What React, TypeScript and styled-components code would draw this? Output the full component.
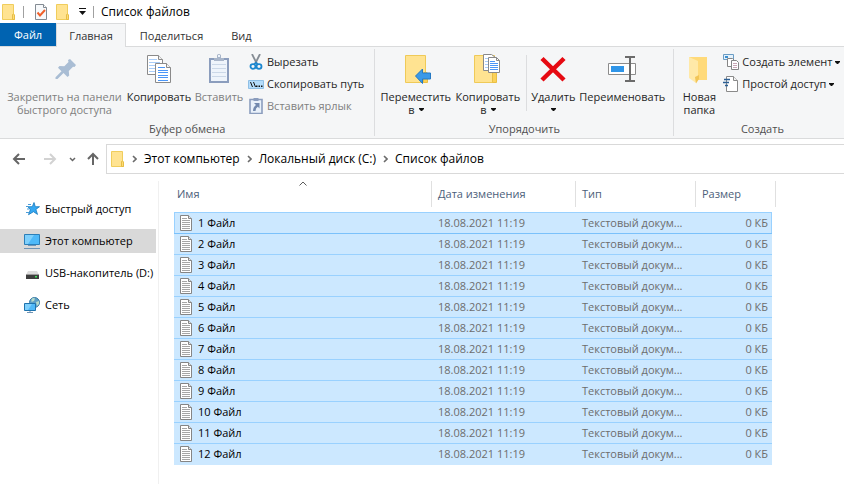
import React from "react";
import styled, { createGlobalStyle, css } from "styled-components";

const GlobalStyle = createGlobalStyle`
  *, *::before, *::after { box-sizing: border-box; }
  body {
    margin: 0;
    background: #fff;
    color: #000;
    font-family: "Open Sans", "Noto Sans", sans-serif;
    font-size: 12px;
    line-height: 16px;
  }
  button {
    font: inherit;
    color: inherit;
    background: none;
    border: 0;
    padding: 0;
    cursor: default;
  }
  svg { display: block; flex: none; }
`;

/* ---------- icons ---------- */

const FolderIcon = () => (
  <svg width="14" height="16" viewBox="0 0 14 16" aria-hidden="true">
    <path d="M.5 .5h11v9.5l1 1v4.500H.5z" fill="#ffe391" stroke="#f0cd5c" />
    <path d="M10.500 15.500v-5q1-.8 2 .5v4.500z" fill="#ffdc75" stroke="#e6bd45" />
  </svg>
);

const CheckDocIcon = () => (
  <svg width="12" height="16" viewBox="0 0 12 16" aria-hidden="true">
    <path d="M.5.5h8l3 3v12H.5z" fill="#f7f9fb" stroke="#838b93" />
    <path d="M8.500.5v3h3" fill="#fff" stroke="#838b93" />
    <path d="M2.500 8.500l2.500 3 5-5.500" fill="none" stroke="#f0602a" strokeWidth="2" />
  </svg>
);

const CustomizeIcon = () => (
  <svg width="7" height="8" viewBox="0 0 7 8" aria-hidden="true">
    <path d="M0 0h7v1H0zM0 3h7L3.500 7z" fill="#111" />
  </svg>
);

const Caret = () => (
  <svg width="5" height="3" viewBox="0 0 5 3" aria-hidden="true">
    <path d="M0 0h5v1L3 3H2L0 1z" fill="#111" />
  </svg>
);

const PinIcon = () => (
  <svg width="32" height="32" viewBox="0 0 32 32" aria-hidden="true">
    <path
      d="M19 6l2-1 6 6-1.500 2-1.500-.3-4.200 4.300.4 4.500-1.700 1.500-4-4-6 6H6.500v-1.700l6-6-3.500-3.500 1.500-1.800 4.800.3L19.500 8z"
      fill="#a9bdd4"
    />
  </svg>
);

const CopyIcon = () => (
  <svg width="32" height="32" viewBox="0 0 32 32" aria-hidden="true">
    <path d="M4.500 1.500h11l4 4v15h-15z" fill="#fff" stroke="#8a8a8a" />
    <path d="M15.500 1.500v4h4" fill="#f2f2f2" stroke="#8a8a8a" />
    <path d="M6 5.500h8M6 8.500h11M6 11.500h6M6 14.500h6M6 17.500h6" stroke="#a9cdf8" />
    <path d="M12.500 9.500h11l4 4v15h-15z" fill="#fff" stroke="#8a8a8a" />
    <path d="M23.500 9.500v4h4" fill="#f2f2f2" stroke="#8a8a8a" />
    <path d="M15 13.500h7M15 16.500h10M15 18.500h10M15 21.500h10M15 23.500h10M15 26.500h10" stroke="#4b96f7" />
  </svg>
);

const PasteIcon = () => (
  <svg width="32" height="32" viewBox="0 0 32 32" aria-hidden="true">
    <path d="M6 4h20v25H6z" fill="#8b9dbd" />
    <path d="M8 6h16v21H8z" fill="#eef4fb" />
    <path d="M9 10.500h14M9 14.500h14M9 18.500h14M9 22.500h14" stroke="#cbd8e8" />
    <path d="M11 4h3V1q2-2 4 0v3h3v3H11z" fill="#a9b6ca" />
    <path d="M15 1h2v2h-2z" fill="#eef4fb" />
  </svg>
);

const ScissorsIcon = () => (
  <svg width="16" height="16" viewBox="0 0 16 16" aria-hidden="true">
    <path d="M4 0l5 10M12 0L7 10" stroke="#858c94" strokeWidth="1.800" fill="none" />
    <ellipse cx="5" cy="12.500" rx="2.500" ry="2.300" fill="none" stroke="#1b87cf" strokeWidth="1.800" />
    <ellipse cx="11" cy="12.500" rx="2.500" ry="2.300" fill="none" stroke="#1b87cf" strokeWidth="1.800" />
    <path d="M6 10.500l2-2 2 2" fill="none" stroke="#1b87cf" strokeWidth="1.500" />
  </svg>
);

const PathIcon = () => (
  <svg width="16" height="16" viewBox="0 0 16 16" aria-hidden="true">
    <path d="M.5 4.500h15v8H.5z" fill="#b4dcfb" stroke="#8fbfe5" />
    <path d="M2.500 6l2 5M5.500 6l2 5" stroke="#111" />
    <path d="M8 9.500h1.500v1.500H8zM10.500 9.500H12v1.500h-1.500zM13 9.500h1.500v1.500H13z" fill="#111" />
  </svg>
);

const ShortcutIcon = () => (
  <svg width="16" height="16" viewBox="0 0 16 16" aria-hidden="true">
    <path d="M2 1.500h12v14H2z" fill="#e9f1fa" stroke="#8b9dbd" strokeWidth="1.600" />
    <path d="M5.500 0h5v3h-5z" fill="#8b9dbd" />
    <path d="M6 5h5.500v5.500L9.800 8.800Q7.500 10 7.500 13H5q0-4 3-6z" fill="#7389ae" />
  </svg>
);

const MoveIcon = () => (
  <svg width="32" height="32" viewBox="0 0 32 32" aria-hidden="true">
    <path d="M5.500 1.500h20v17h1v10h-21z" fill="#ffe391" stroke="#efca58" />
    <path d="M23.500 28.500V19q1.500-1.500 4 0v9.500z" fill="#fbd25a" stroke="#e9bf45" />
    <path d="M15.500 22l7-7v4h8v6h-8v4.500z" fill="#3a99e8" stroke="#2478c3" />
  </svg>
);

const CopyToIcon = () => (
  <svg width="32" height="32" viewBox="0 0 32 32" aria-hidden="true">
    <path d="M2.500 1.500h20v17h1v10h-21z" fill="#ffe391" stroke="#efca58" />
    <path d="M20.500 28.500V19q1.500-1.500 4 0v9.500z" fill="#fbd25a" stroke="#e9bf45" />
    <path d="M11.500.5h8l4 3v13h-12z" fill="#fff" stroke="#8a8a8a" />
    <path d="M13 4.500h3M13 7.500h3M13 10.500h3M13 13.500h3" stroke="#a9cdf8" />
    <path d="M16.500 3.500h8l3 3v12h-11z" fill="#fff" stroke="#8a8a8a" />
    <path d="M24.500 3.500v3h3" fill="none" stroke="#8a8a8a" />
    <path d="M18 7.500h5M18 9.500h8M18 11.500h8M18 13.500h8M18 15.500h8" stroke="#4b96f7" />
  </svg>
);

const DeleteIcon = () => (
  <svg width="32" height="32" viewBox="0 0 32 32" aria-hidden="true">
    <path d="M5 4.500L27 26M27 4.500L5 26" stroke="#e60a12" strokeWidth="4.500" fill="none" />
  </svg>
);

const RenameIcon = () => (
  <svg width="32" height="32" viewBox="0 0 32 32" aria-hidden="true">
    <path d="M2.500 9.500h27v11h-27z" fill="#fff" stroke="#8c8c8c" />
    <path d="M5 12h13v6H5z" fill="#2f95e8" />
    <path d="M19 3h4.500l.5 1 .5-1H29M24 4v22M19 27h4.500l.5-1 .5 1H29" stroke="#6b6b6b" strokeWidth="2" fill="none" />
  </svg>
);

const NewFolderIcon = () => (
  <svg width="32" height="32" viewBox="0 0 32 32" aria-hidden="true">
    <path d="M6 3h18v23H10z" fill="#ffda7a" />
    <path d="M6 3l9 4v16l-2 6-7-5z" fill="#ffe9a8" />
    <path d="M12 23l4-2v4l-3 4.500z" fill="#f2c557" />
  </svg>
);

const NewItemIcon = () => (
  <svg width="16" height="16" viewBox="0 0 16 16" aria-hidden="true">
    <path d="M.5.5h10v5H.5z" fill="#e4f1fb" stroke="#6a9cc4" />
    <path d="M2 2h3v2H2z" fill="#3b8fd0" />
    <path d="M4.500 4.500h5l2 2v6h-7z" fill="#fff" stroke="#858585" />
    <path d="M8.500 6.500h5l2 2v7h-7z" fill="#fff" stroke="#858585" />
    <path d="M10 9.500h4M10 11.500h4M10 13.500h4" stroke="#c9a6b6" />
  </svg>
);

const EasyAccessIcon = () => (
  <svg width="16" height="16" viewBox="0 0 16 16" aria-hidden="true">
    <path d="M3.500.5h7l4 4v11h-11z" fill="#fff" stroke="#8a8a8a" />
    <path d="M10.500.5v4h4" fill="#f2f2f2" stroke="#8a8a8a" />
    <path d="M1 3.500h6M0 6.500h6M2 9.500h3" stroke="#2c5f94" strokeWidth="1.300" />
  </svg>
);

const ArrowLeft = () => (
  <svg width="14" height="12" viewBox="0 0 14 12" aria-hidden="true">
    <path d="M7 1L2 6l5 5M2 6h11" fill="none" stroke="currentColor" strokeWidth="2" />
  </svg>
);

const ArrowRight = () => (
  <svg width="14" height="12" viewBox="0 0 14 12" aria-hidden="true">
    <path d="M7 1l5 5-5 5M12 6H1" fill="none" stroke="currentColor" strokeWidth="2" />
  </svg>
);

const ArrowUp = () => (
  <svg width="12" height="14" viewBox="0 0 12 14" aria-hidden="true">
    <path d="M1 7l5-5 5 5M6 2v11" fill="none" stroke="currentColor" strokeWidth="2" />
  </svg>
);

const ChevronDown = () => (
  <svg width="7" height="5" viewBox="0 0 7 5" aria-hidden="true">
    <path d="M1 1l2.500 2.500L6 1" fill="none" stroke="currentColor" strokeWidth="1.500" />
  </svg>
);

const ChevronRight = () => (
  <svg width="5" height="8" viewBox="0 0 5 8" aria-hidden="true">
    <path d="M1 1l3 3-3 3" fill="none" stroke="#6b6b6b" strokeWidth="1.600" />
  </svg>
);

const SortUp = () => (
  <svg width="9" height="5" viewBox="0 0 9 5" aria-hidden="true">
    <path d="M1 4.500l3.500-3.500L8 4.500" fill="none" stroke="#5c5c5c" />
  </svg>
);

const StarIcon = () => (
  <svg width="16" height="16" viewBox="0 0 16 16" aria-hidden="true">
    <path
      d="M10 1.500l1.300 4.200H15.500l-3.600 2.700 1.600 5L9.500 10.700l-5 3 1.800-4.900L4 5.700h4.300z"
      fill="#35a8f2"
      stroke="#1779bd"
      strokeWidth=".8"
    />
    <path d="M4 3.500h3M2 5.500h3M3 8h2M2 11.500h3" stroke="#4b9dd8" />
  </svg>
);

const ComputerIcon = () => (
  <svg width="16" height="16" viewBox="0 0 16 16" aria-hidden="true">
    <path d="M.5 1.500h15v10H.5z" fill="#4fb9f8" stroke="#2c7fb8" />
    <path d="M1 2h9L4 11H1z" fill="#7fd0fc" />
    <path d="M4 12.500h8M0 15.500h16" stroke="#6f94b5" />
  </svg>
);

const DriveIcon = () => (
  <svg width="16" height="16" viewBox="0 0 16 16" aria-hidden="true">
    <path d="M4 6h9l2 4H2z" fill="#dcdcdc" />
    <path d="M2 9h13v5H2z" fill="#3d3d3d" />
    <path d="M2 9h13v1H2z" fill="#9c9c9c" />
    <path d="M11 11h2v1.500h-2z" fill="#3fe05a" />
  </svg>
);

const NetworkIcon = () => (
  <svg width="16" height="16" viewBox="0 0 16 16" aria-hidden="true">
    <circle cx="10.500" cy="5.500" r="5" fill="#5d9fc6" stroke="#3a7ca6" />
    <path d="M7.500 2q2-1.500 3.500-.5l-1 2.500-2.500 1zM12 5l3-1v3l-2 2z" fill="#b7dbc9" />
    <path d="M.5 6.500h11v7H.5z" fill="#4fb9f8" stroke="#1f73ad" />
    <path d="M1 7h7l-4 6H1z" fill="#7fd0fc" />
    <path d="M6 14v1.500M3 15.500h6" stroke="#6f94b5" />
  </svg>
);

const TextFileIcon = () => (
  <svg width="12" height="16" viewBox="0 0 12 16" aria-hidden="true">
    <path d="M.5.5h8l3 3v12H.5z" fill="#fff" stroke="#858585" />
    <path d="M8.500.5v3h3" fill="#e4e4e4" stroke="#858585" />
    <path d="M2 3.500h5M2 5.500h8M2 7.500h8M2 9.500h8M2 11.500h8M2 13.500h8" stroke="#a6a6a6" />
  </svg>
);

/* ---------- title bar and tabs ---------- */

const Window = styled.div`
  display: flex;
  flex-direction: column;
  min-height: 100vh;
`;

const TitleBar = styled.header`
  display: flex;
  align-items: center;
  height: 23px;
  padding-left: 2px;
`;

const TitleDivider = styled.span`
  width: 1px;
  height: 12px;
  margin: 0 7px;
  background: #a0a0a0;
`;

const QuickActions = styled.div`
  display: flex;
  align-items: center;
  gap: 9px;
  padding-left: 4px;
`;

const QuickButton = styled.button`
  display: flex;
`;

const WindowTitle = styled.h1`
  margin: 0;
  font-size: 12px;
  font-weight: 400;
`;

const TabBar = styled.div`
  display: flex;
  height: 24px;
  margin-bottom: -1px;
  font-size: 11px;
`;

const Tab = styled.button<{ $kind?: "file" | "active" }>`
  padding: 0 13px;
  height: 24px;
  border: 1px solid transparent;
  border-bottom: 0;
  color: #333;
  ${({ $kind }) =>
    $kind === "file" &&
    css`
      height: 23px;
      background: #0063b1;
      color: #fff;
    `}
  ${({ $kind }) =>
    $kind === "active" &&
    css`
      background: #f5f6f7;
      border-color: #dadbdc;
      padding: 0 12px;
      z-index: 1;
    `}
`;

/* ---------- ribbon ---------- */

const Ribbon = styled.section`
  display: flex;
  height: 93px;
  background: #f5f6f7;
  border-top: 1px solid #dadbdc;
  border-bottom: 1px solid #dadbdc;
  padding: 2px 0;
  overflow: hidden;
  font-size: 11px;
`;

const Group = styled.div<{ $grow?: boolean }>`
  display: flex;
  flex-direction: column;
  justify-content: space-between;
  flex: ${({ $grow }) => ($grow ? "1 0 auto" : "none")};
  border-right: ${({ $grow }) => ($grow ? "0" : "1px solid #dcdddf")};
`;

const GroupBody = styled.div`
  display: flex;
  padding: 2px 6px 0 4px;
`;

const GroupLabel = styled.div`
  text-align: center;
  color: #505050;
  line-height: 14px;
`;

const BigButton = styled.button<{ $width: number }>`
  display: flex;
  flex-direction: column;
  align-items: center;
  width: ${({ $width }) => $width}px;
  padding-top: 3px;
  color: #262626;
  line-height: 13px;
  white-space: nowrap;
  &:disabled { color: #808080; }
`;

const BigLabel = styled.span`
  display: flex;
  flex-direction: column;
  align-items: center;
  padding-top: 4px;
`;

const LabelLine = styled.span`
  display: flex;
  align-items: center;
  gap: 4px;
  min-height: 13px;
`;

const InnerDivider = styled.span`
  width: 1px;
  height: 56px;
  margin: 4px 2px 0 3px;
  background: #dcdddf;
`;

const SmallColumn = styled.div`
  display: flex;
  flex-direction: column;
`;

const SmallButton = styled.button`
  display: flex;
  align-items: center;
  gap: 3px;
  height: 22px;
  padding: 0 4px 0 3px;
  color: #262626;
  white-space: nowrap;
  &:disabled { color: #808080; }
`;

/* ---------- address bar ---------- */

const AddressBar = styled.div`
  display: flex;
  align-items: center;
  padding: 5px 0 6px 12px;
`;

const NavButton = styled.button<{ $width: number }>`
  display: flex;
  align-items: center;
  justify-content: flex-start;
  width: ${({ $width }) => $width}px;
  color: #666;
  &:disabled { color: #d2d2d2; }
`;

const Breadcrumbs = styled.nav`
  display: flex;
  flex: 1;
  align-items: center;
  gap: 7px;
  height: 30px;
  padding: 0 4px;
  border: 1px solid #d9d9d9;
  border-right: 0;
`;

const Crumb = styled.a`
  color: #000;
  text-decoration: none;
  white-space: nowrap;
`;

/* ---------- content ---------- */

const Content = styled.div`
  display: flex;
  flex: 1;
  padding-top: 1px;
`;

const Sidebar = styled.nav`
  display: flex;
  flex: none;
  flex-direction: column;
  gap: 8px;
  width: 159px;
  padding: 16px 2px 0 0;
  border-right: 1px solid #f0f0f0;
  font-size: 11px;
`;

const SideLink = styled.a<{ $current?: boolean }>`
  display: flex;
  align-items: center;
  gap: 5px;
  height: 24px;
  padding-left: 24px;
  color: #000;
  background: ${({ $current }) => ($current ? "#d9d9d9" : "transparent")};
  text-decoration: none;
  white-space: nowrap;
`;

const FileTable = styled.table`
  display: block;
  flex: 0 1 602px;
  margin-left: 15px;
  font-size: 11px;
`;

const HeadSection = styled.thead`
  display: block;
`;

const HeadRow = styled.tr`
  display: grid;
  grid-template-columns: minmax(120px, 1fr) 144px 120px 80px;
  height: 26px;
`;

const HeadCell = styled.th`
  position: relative;
  display: flex;
  align-items: center;
  padding: 0 6px;
  border-right: 1px solid #e0e0e0;
  font-weight: 400;
  color: #4c607a;
  &:first-child { padding-left: 3px; }
`;

const SortMark = styled.span`
  position: absolute;
  top: 0;
  left: 50%;
  transform: translateX(-50%);
`;

const BodySection = styled.tbody`
  display: block;
  margin: 5px 4px 0 0;
`;

const FileRow = styled.tr<{ $focused: boolean }>`
  display: grid;
  grid-template-columns: minmax(120px, 1fr) 144px 120px 76px;
  height: 21px;
  background: #cce8ff;
  border-bottom: 1px solid #99d1ff;
  &:last-child { border-bottom-color: #cce8ff; }
  ${({ $focused }) =>
    $focused &&
    css`
      height: 22px;
      border-bottom-color: #7ac1fb;
      box-shadow: inset 1px 1px #99d1ff, inset -1px 0 #99d1ff;
    `}
`;

const Cell = styled.td<{ $align?: "right" }>`
  display: flex;
  align-items: center;
  justify-content: ${({ $align }) => ($align === "right" ? "flex-end" : "flex-start")};
  padding: 0 4px 0 6px;
  color: #6d6d6d;
  white-space: nowrap;
`;

const NameCell = styled(Cell)`
  gap: 6px;
  color: #000;
`;

const files = Array.from({ length: 12 }, (_, i) => `${i + 1} Файл`);

export default function App() {
  return (
    <Window>
      <GlobalStyle />
      <TitleBar>
        <FolderIcon />
        <TitleDivider />
        <QuickActions>
          <QuickButton aria-label="Свойства"><CheckDocIcon /></QuickButton>
          <QuickButton aria-label="Новая папка"><FolderIcon /></QuickButton>
          <QuickButton aria-label="Настройка панели"><CustomizeIcon /></QuickButton>
        </QuickActions>
        <TitleDivider />
        <WindowTitle>Список файлов</WindowTitle>
      </TitleBar>

      <TabBar role="tablist">
        <Tab role="tab" $kind="file">Файл</Tab>
        <Tab role="tab" $kind="active" aria-selected="true">Главная</Tab>
        <Tab role="tab">Поделиться</Tab>
        <Tab role="tab">Вид</Tab>
      </TabBar>

      <Ribbon>
        <Group>
          <GroupBody>
            <BigButton $width={121} disabled>
              <PinIcon />
              <BigLabel>
                <LabelLine>Закрепить на панели</LabelLine>
                <LabelLine>быстрого доступа</LabelLine>
              </BigLabel>
            </BigButton>
            <BigButton $width={68}>
              <CopyIcon />
              <BigLabel><LabelLine>Копировать</LabelLine></BigLabel>
            </BigButton>
            <BigButton $width={52} disabled>
              <PasteIcon />
              <BigLabel><LabelLine>Вставить</LabelLine></BigLabel>
            </BigButton>
            <SmallColumn>
              <SmallButton><ScissorsIcon />Вырезать</SmallButton>
              <SmallButton><PathIcon />Скопировать путь</SmallButton>
              <SmallButton disabled><ShortcutIcon />Вставить ярлык</SmallButton>
            </SmallColumn>
          </GroupBody>
          <GroupLabel>Буфер обмена</GroupLabel>
        </Group>

        <Group>
          <GroupBody>
            <BigButton $width={73}>
              <MoveIcon />
              <BigLabel>
                <LabelLine>Переместить</LabelLine>
                <LabelLine>в<Caret /></LabelLine>
              </BigLabel>
            </BigButton>
            <BigButton $width={71}>
              <CopyToIcon />
              <BigLabel>
                <LabelLine>Копировать</LabelLine>
                <LabelLine>в<Caret /></LabelLine>
              </BigLabel>
            </BigButton>
            <InnerDivider />
            <BigButton $width={48}>
              <DeleteIcon />
              <BigLabel>
                <LabelLine>Удалить</LabelLine>
                <LabelLine><Caret /></LabelLine>
              </BigLabel>
            </BigButton>
            <BigButton $width={90}>
              <RenameIcon />
              <BigLabel><LabelLine>Переименовать</LabelLine></BigLabel>
            </BigButton>
          </GroupBody>
          <GroupLabel>Упорядочить</GroupLabel>
        </Group>

        <Group $grow>
          <GroupBody>
            <BigButton $width={42}>
              <NewFolderIcon />
              <BigLabel>
                <LabelLine>Новая</LabelLine>
                <LabelLine>папка</LabelLine>
              </BigLabel>
            </BigButton>
            <SmallColumn>
              <SmallButton><NewItemIcon />Создать элемент<Caret /></SmallButton>
              <SmallButton><EasyAccessIcon />Простой доступ<Caret /></SmallButton>
            </SmallColumn>
          </GroupBody>
          <GroupLabel>Создать</GroupLabel>
        </Group>
      </Ribbon>

      <AddressBar>
        <NavButton $width={31} aria-label="Назад"><ArrowLeft /></NavButton>
        <NavButton $width={26} aria-label="Вперед" disabled><ArrowRight /></NavButton>
        <NavButton $width={18} aria-label="Последние расположения"><ChevronDown /></NavButton>
        <NavButton $width={19} aria-label="Вверх"><ArrowUp /></NavButton>
        <Breadcrumbs aria-label="Адрес">
          <FolderIcon />
          <ChevronRight />
          <Crumb href="#computer">Этот компьютер</Crumb>
          <ChevronRight />
          <Crumb href="#disk">Локальный диск (C:)</Crumb>
          <ChevronRight />
          <Crumb href="#list">Список файлов</Crumb>
        </Breadcrumbs>
      </AddressBar>

      <Content>
        <Sidebar aria-label="Область навигации">
          <SideLink href="#quick"><StarIcon />Быстрый доступ</SideLink>
          <SideLink href="#computer" $current><ComputerIcon />Этот компьютер</SideLink>
          <SideLink href="#usb"><DriveIcon />USB-накопитель (D:)</SideLink>
          <SideLink href="#network"><NetworkIcon />Сеть</SideLink>
        </Sidebar>
        <FileTable>
          <HeadSection>
            <HeadRow>
              <HeadCell scope="col" aria-sort="ascending">
                Имя
                <SortMark><SortUp /></SortMark>
              </HeadCell>
              <HeadCell scope="col">Дата изменения</HeadCell>
              <HeadCell scope="col">Тип</HeadCell>
              <HeadCell scope="col">Размер</HeadCell>
            </HeadRow>
          </HeadSection>
          <BodySection>
            {files.map((name, i) => (
              <FileRow key={name} $focused={i === 0}>
                <NameCell><TextFileIcon />{name}</NameCell>
                <Cell>18.08.2021 11:19</Cell>
                <Cell>Текстовый докум...</Cell>
                <Cell $align="right">0 КБ</Cell>
              </FileRow>
            ))}
          </BodySection>
        </FileTable>
      </Content>
    </Window>
  );
}
